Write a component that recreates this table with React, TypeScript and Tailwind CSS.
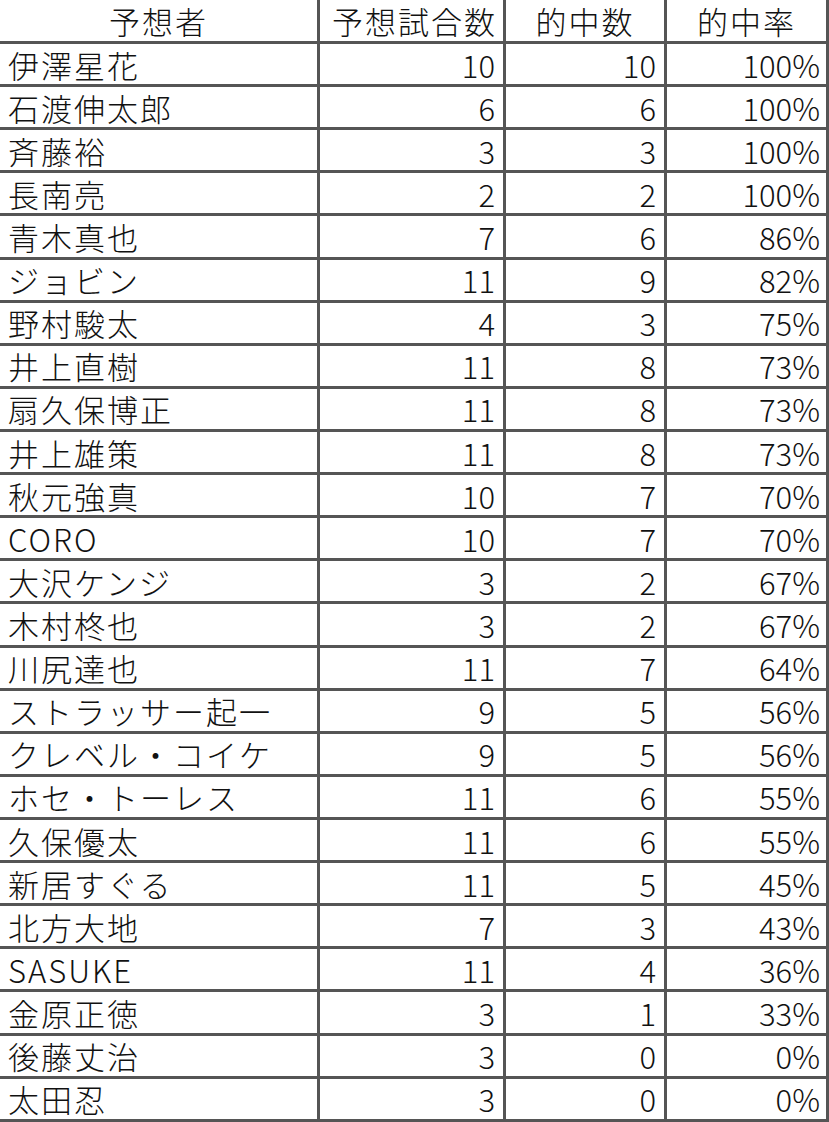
import React from "react";

type Row = [string, number, number, string];

const rows: Row[] = [
  ["伊澤星花", 10, 10, "100%"],
  ["石渡伸太郎", 6, 6, "100%"],
  ["斉藤裕", 3, 3, "100%"],
  ["長南亮", 2, 2, "100%"],
  ["青木真也", 7, 6, "86%"],
  ["ジョビン", 11, 9, "82%"],
  ["野村駿太", 4, 3, "75%"],
  ["井上直樹", 11, 8, "73%"],
  ["扇久保博正", 11, 8, "73%"],
  ["井上雄策", 11, 8, "73%"],
  ["秋元強真", 10, 7, "70%"],
  ["CORO", 10, 7, "70%"],
  ["大沢ケンジ", 3, 2, "67%"],
  ["木村柊也", 3, 2, "67%"],
  ["川尻達也", 11, 7, "64%"],
  ["ストラッサー起一", 9, 5, "56%"],
  ["クレベル・コイケ", 9, 5, "56%"],
  ["ホセ・トーレス", 11, 6, "55%"],
  ["久保優太", 11, 6, "55%"],
  ["新居すぐる", 11, 5, "45%"],
  ["北方大地", 7, 3, "43%"],
  ["SASUKE", 11, 4, "36%"],
  ["金原正徳", 3, 1, "33%"],
  ["後藤丈治", 3, 0, "0%"],
  ["太田忍", 3, 0, "0%"],
];

const cell = "flex items-center border-r-[3px] border-b-[3px] border-[#555555] px-2";

export default function App() {
  return (
    <div
      className="w-[829px] bg-white text-[31px] font-light leading-none text-[#111111]"
      style={{ fontFamily: '"Noto Sans CJK JP", "Noto Sans", sans-serif' }}
    >
      <div className="grid h-[44px] grid-cols-[320px_186px_161px_162px] tracking-[2px]">
        <div className={`${cell} justify-center`}>予想者</div>
        <div className={`${cell} justify-end pr-1.5`}>予想試合数</div>
        <div className={`${cell} justify-center`}>的中数</div>
        <div className={`${cell} justify-center`}>的中率</div>
      </div>
      {rows.map(([name, games, hits, rate]) => (
        <div key={name} className="grid h-[43.12px] grid-cols-[320px_186px_161px_162px]">
          <div className={`${cell} justify-start tracking-[2px]`}>{name}</div>
          <div className={`${cell} justify-end`}>{games}</div>
          <div className={`${cell} justify-end`}>{hits}</div>
          <div className={`${cell} justify-end pr-1.5`}>{rate}</div>
        </div>
      ))}
    </div>
  );
}
